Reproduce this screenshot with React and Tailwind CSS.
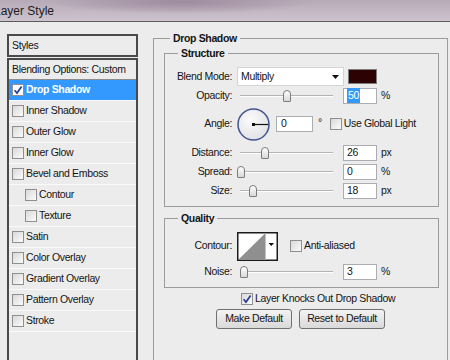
import React from "react";

// Photoshop "Layer Style" dialog, Drop Shadow page

function Check({ checked, className = "" }) {
  return (
    <span className={"flex h-[12px] w-[12px] shrink-0 items-center justify-center border border-[#8f8f8f] bg-gradient-to-br from-[#d9d9d9] to-[#fbfbfb] " + className}>
      {checked && (
        <svg width="10" height="10" viewBox="0 0 10 10">
          <path d="M1.6 5.2 L4 8 L8.6 1.4" fill="none" stroke="#2b3d8f" strokeWidth="1.7" />
        </svg>
      )}
    </span>
  );
}

function Slider({ pos }) {
  return (
    <div className="relative ml-[3px] h-[14px] w-[93px]">
      <div className="absolute left-0 right-0 top-[6px] h-[2px] border-t border-[#b4b4b4] bg-white" />
      <div
        className="absolute top-[1px] h-[12px] w-[8px] rounded-t-[4px] rounded-b-[1px] border border-[#7c7c7c] bg-gradient-to-b from-white to-[#d8d8d8]"
        style={{ left: pos - 4 }}
      />
    </div>
  );
}

function Field({ children, className = "w-[34px]" }) {
  return (
    <span className={"flex h-[16px] items-center border border-[#abadb3] bg-white pl-[3px] " + className}>
      {children}
    </span>
  );
}

function SliderRow({ label, pos, value, unit }) {
  return (
    <div className="flex h-[19px] items-center">
      <span className="w-[67px] text-right">{label}</span>
      <div className="ml-[5px] flex items-center">
        <Slider pos={pos} />
        <Field className="ml-[10px] w-[34px]">{value}</Field>
        <span className="ml-[4px]">{unit}</span>
      </div>
    </div>
  );
}

const styles = [
  { name: "Inner Shadow" },
  { name: "Outer Glow" },
  { name: "Inner Glow" },
  { name: "Bevel and Emboss" },
  { name: "Contour", sub: true },
  { name: "Texture", sub: true },
  { name: "Satin" },
  { name: "Color Overlay" },
  { name: "Gradient Overlay" },
  { name: "Pattern Overlay" },
  { name: "Stroke" },
];

export default function App() {
  return (
    <div className="flex h-[360px] w-[450px] flex-col overflow-hidden bg-[#ececec] font-['Liberation_Sans',Arial,sans-serif] text-[10.5px] tracking-[-0.35px] text-[#141414]">
      {/* title bar */}
      <div className="h-[22px] shrink-0 border-b border-[#5c5c5c] bg-[radial-gradient(ellipse_130px_12px_at_180px_2px,#9d8b9e,transparent),linear-gradient(to_bottom,#b7a9b8,#cdc4ce)] pt-[2px]">
        <span className="ml-[-6px] text-[12px] tracking-normal text-[#1c1c1c]">Layer Style</span>
      </div>

      <div className="flex items-start pl-[7px] pt-[9px]">
        {/* styles list */}
        <div className="mt-[3px] flex w-[131px] flex-col">
          <div className="flex h-[23px] items-center border-2 border-[#4a4a4a] pl-[3px]">Styles</div>
          <div className="mt-[1px] h-[320px] border-2 border-[#4a4a4a]">
            <div className="flex h-[20px] items-center border-b border-[#8c8c8c] pl-[3px]">Blending Options: Custom</div>
            <div className="flex h-[21px] items-center gap-[2px] border-b border-[#fafafa] bg-[#3399ff] pl-[3px] font-bold text-white">
              <Check checked className="bg-none bg-white" />
              Drop Shadow
            </div>
            {styles.map((s) => (
              <div
                key={s.name}
                className={"flex h-[21px] items-center gap-[2px] border-b border-[#fafafa] " + (s.sub ? "pl-[16px]" : "pl-[3px]")}
              >
                <Check />
                {s.name}
              </div>
            ))}
          </div>
        </div>

        {/* drop shadow page */}
        <fieldset className="ml-[15px] w-[295px] border border-[#9c9c9c] pb-[60px]">
          <legend className="ml-[16px] px-[3px] font-bold leading-[14px]">Drop Shadow</legend>

          <fieldset className="ml-[10px] mt-[1px] w-[275px] border border-[#9c9c9c] pb-[6px] pt-[7px]">
            <legend className="ml-[13px] px-[3px] font-bold leading-[14px]">Structure</legend>

            <div className="flex h-[19px] items-center">
              <span className="w-[67px] text-right">Blend Mode:</span>
              <div className="ml-[5px] flex h-[19px] w-[107px] items-center justify-between border border-[#d4d4d4] bg-white pl-[3px] pr-[4px]">
                <span>Multiply</span>
                <svg width="7" height="4" viewBox="0 0 7 4">
                  <path d="M0 0 H7 L3.5 4 Z" fill="#111" />
                </svg>
              </div>
              <span className="ml-[4px] h-[15px] w-[29px] border border-[#7d7d7d] bg-[#2c0203]" />
            </div>

            <div className="flex h-[19px] items-center">
              <span className="w-[67px] text-right">Opacity:</span>
              <div className="ml-[5px] flex items-center">
                <Slider pos={47} />
                <Field className="ml-[10px] w-[34px]">
                  <span className="bg-[#3399ff] px-[1px] text-white">50</span>
                </Field>
                <span className="ml-[4px]">%</span>
              </div>
            </div>

            <div className="flex h-[38px] items-center">
              <span className="w-[67px] text-right">Angle:</span>
              <svg className="ml-[5px]" width="33" height="33" viewBox="0 0 33 33">
                <defs>
                  <radialGradient id="dial" cx="40%" cy="35%" r="70%">
                    <stop offset="0" stopColor="#fbfbfb" />
                    <stop offset="1" stopColor="#e1e1e6" />
                  </radialGradient>
                </defs>
                <circle cx="16.5" cy="16.5" r="15.5" fill="url(#dial)" stroke="#43548c" strokeWidth="1.5" />
                <line x1="16.5" y1="16.5" x2="31.5" y2="16.5" stroke="#111" strokeWidth="1.2" />
                <rect x="15" y="15" width="3" height="3" fill="#111" />
              </svg>
              <Field className="ml-[6px] w-[37px] pl-[4px]">0</Field>
              <span className="ml-[5px] self-start pt-[10px]">°</span>
              <Check className="ml-[8px]" />
              <span className="ml-[2px]">Use Global Light</span>
            </div>

            <SliderRow label="Distance:" pos={25} value="26" unit="px" />
            <SliderRow label="Spread:" pos={1} value="0" unit="%" />
            <SliderRow label="Size:" pos={13} value="18" unit="px" />
          </fieldset>

          <fieldset className="ml-[10px] mt-[4px] w-[275px] border border-[#9c9c9c] pb-[6px] pt-[6px]">
            <legend className="ml-[13px] px-[3px] font-bold leading-[14px]">Quality</legend>

            <div className="flex h-[30px] items-center">
              <span className="w-[67px] text-right">Contour:</span>
              <svg className="ml-[5px]" width="41" height="29" viewBox="0 0 41 29">
                <rect x="0.75" y="0.75" width="39.5" height="27.5" fill="#fff" stroke="#1c1c1c" strokeWidth="1.5" />
                <polygon points="1.5,27.5 28,1.5 28,27.5" fill="#8f8f8f" />
                <line x1="28.5" y1="1.5" x2="28.5" y2="27.5" stroke="#c4c4c4" />
                <path d="M31.5 11 H37 L34.25 14 Z" fill="#111" />
              </svg>
              <Check className="ml-[12px]" />
              <span className="ml-[2px]">Anti-aliased</span>
            </div>

            <div className="mt-[1px]">
              <SliderRow label="Noise:" pos={4} value="3" unit="%" />
            </div>
          </fieldset>

          <div className="ml-[87px] mt-[4px] flex h-[14px] items-center gap-[2px]">
            <Check checked />
            <span>Layer Knocks Out Drop Shadow</span>
          </div>

          <div className="mt-[3px] flex justify-center gap-[7px]">
            <button className="h-[20px] w-[76px] rounded-[3px] border border-[#707070] bg-gradient-to-b from-[#f3f3f3] to-[#d9d9d9]">
              Make Default
            </button>
            <button className="h-[20px] w-[86px] rounded-[3px] border border-[#707070] bg-gradient-to-b from-[#f3f3f3] to-[#d9d9d9]">
              Reset to Default
            </button>
          </div>
        </fieldset>
      </div>
    </div>
  );
}
